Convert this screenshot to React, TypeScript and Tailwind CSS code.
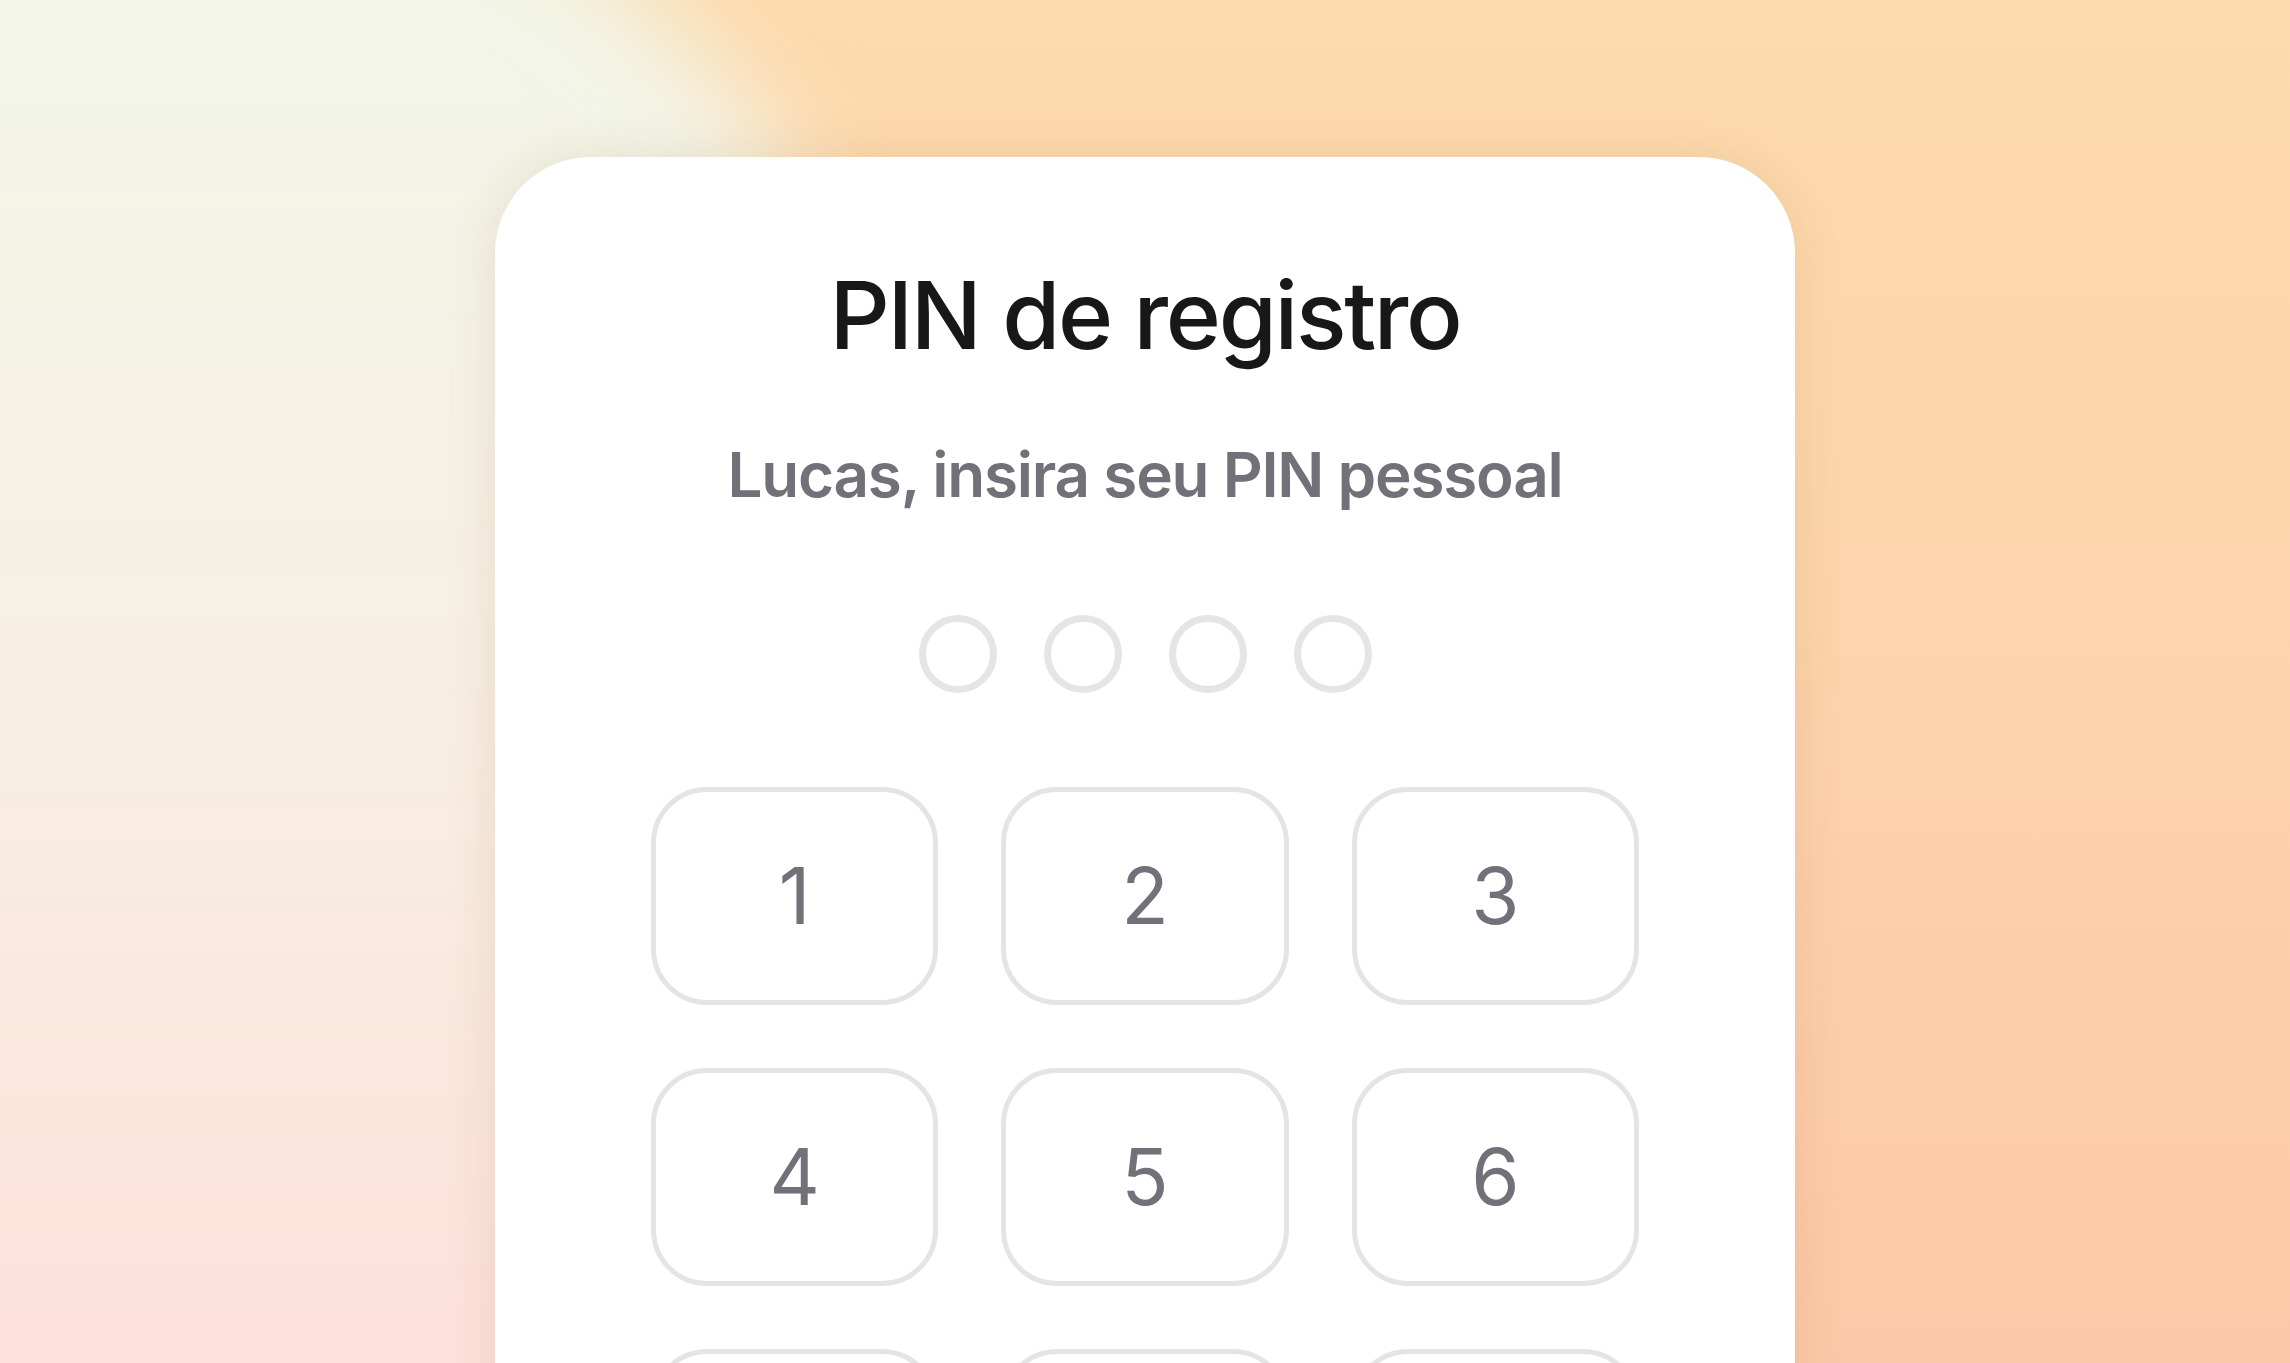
import React from "react";

const keys = ["1", "2", "3", "4", "5", "6", "7", "8", "9", "", "0", "⌫"];

export default function App() {
  return (
    <div className="grid h-[1363px] w-full overflow-hidden bg-[linear-gradient(180deg,#fddbad_0%,#fdd4ab_45%,#fdc8a7_100%)] font-[Inter,sans-serif]">
      <div className="[grid-area:1/1] self-start justify-self-start -ml-[420px] -mt-[150px] h-[1800px] w-[1300px] rounded-full bg-[linear-gradient(180deg,#f2f5e8_0%,#f2f5e8_10%,#f7efe3_45%,#fbe6dc_70%,#fde0da_84%,#fde0da_100%)] blur-[50px]" />
      <div className="relative z-10 [grid-area:1/1] self-start justify-self-center mt-[157px] h-[1400px] w-[1300px] rounded-t-[96px] bg-white shadow-[0_0_50px_rgba(140,100,50,0.14)]">
        <div className="flex flex-col items-center pt-[111px]">
          <h1 className="text-[94px] font-medium leading-none tracking-[-0.025em] text-[#18181b]">
            PIN de registro
          </h1>
          <p className="mt-[82px] text-[62px] font-semibold leading-none tracking-[-0.02em] text-[#71717a]">
            Lucas, insira seu PIN pessoal
          </p>
          <div className="mt-[109px] flex gap-[47px]">
            {[0, 1, 2, 3].map((i) => (
              <div
                key={i}
                className="h-[78px] w-[78px] rounded-full border-[7px] border-[#e5e5e5]"
              />
            ))}
          </div>
          <div className="mt-[94px] grid w-[988px] grid-cols-3 gap-[63px]">
            {keys.map((k, i) => (
              <button
                key={i}
                className={
                  k === ""
                    ? "h-[218px] rounded-[56px] border-[5px] border-transparent"
                    : "flex h-[218px] items-center justify-center rounded-[56px] border-[5px] border-[#e4e4e7] bg-white text-[78px] font-normal leading-none text-[#71717a]"
                }
              >
                {k}
              </button>
            ))}
          </div>
        </div>
      </div>
    </div>
  );
}
